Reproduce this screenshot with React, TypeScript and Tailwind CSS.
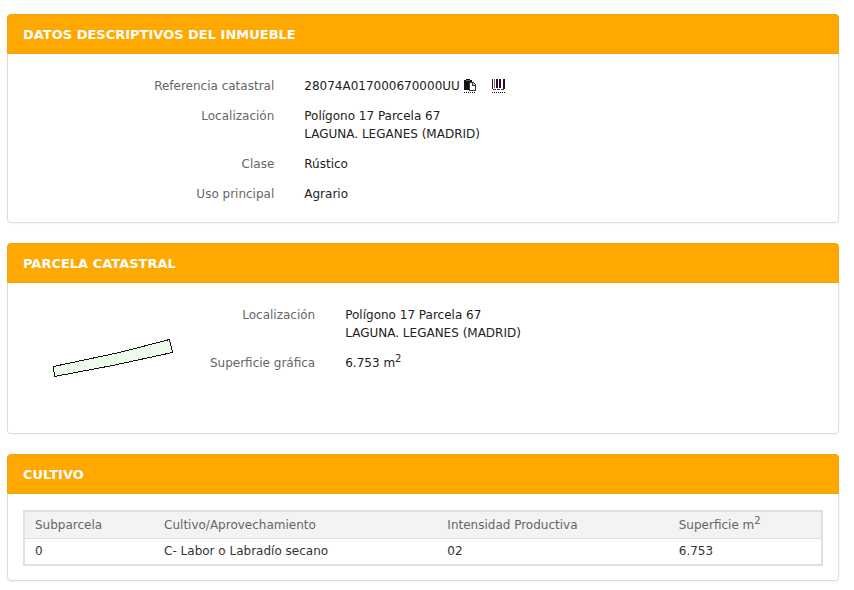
import React from 'react';

type CardProps = {
  title: string;
  children: React.ReactNode;
};

const Card: React.FC<CardProps> = ({ title, children }) => (
  <section className="rounded border border-[#dddddd] bg-white shadow-xs">
    <h2 className="-mx-px -mt-px rounded-t border border-[#f5a30a] bg-[#ffa800] px-[15px] pb-[9px] pt-[11px] text-[13px] font-bold leading-[18px] text-white">
      {title}
    </h2>
    {children}
  </section>
);

const CopyIcon: React.FC = () => (
  <svg width="12" height="14" viewBox="0 0 12 14" shapeRendering="crispEdges">
    <path d="M0 1h2V0h4v1h2v3H5v7H0z" fill="#111" />
    <path d="M2 1h4v1H2z" fill="#666" />
    <path d="M5 3h4l3 3v6H5z" fill="#333" />
    <path d="M6 4h2v3h3v4H6z" fill="#fff" />
    <path d="M9 4l2 2H9z" fill="#ccc" />
    <path d="M0 13.5h12" stroke="#111" strokeDasharray="1 1" />
  </svg>
);

const BarcodeIcon: React.FC = () => (
  <svg width="13" height="14" viewBox="0 0 13 14" shapeRendering="crispEdges">
    <path d="M0 0h1v10H0zM4 0h2v9H4zM7 0h2v9H7zM11 0h2v10h-2z" fill="#2c0f2c" />
    <path d="M2 0h1v9H2z" fill="#8a5c80" />
    <path d="M1 10.5h11" stroke="#5a3352" strokeDasharray="3 1" />
    <path d="M0 13.5h13" stroke="#111" strokeDasharray="1 1" />
  </svg>
);

const App: React.FC = () => {
  return (
    <main className="flex flex-col gap-5 bg-white pb-2 pl-[7px] pr-[15px] pt-[14px] font-['DejaVu_Sans',Verdana,sans-serif] text-[12px] leading-[18px] text-[#222222]">
      {/* Property data */}
      <Card title="DATOS DESCRIPTIVOS DEL INMUEBLE">
        <dl className="grid grid-cols-[32%_1fr] gap-x-[30px] gap-y-3 pb-[19px] pl-px pt-[23px]">
          <dt className="text-right text-[#666666]">Referencia catastral</dt>
          <dd className="flex items-center">
            28074A017000670000UU
            <button type="button" aria-label="Copiar referencia" className="ml-1">
              <CopyIcon />
            </button>
            <button type="button" aria-label="Código de barras" className="ml-4">
              <BarcodeIcon />
            </button>
          </dd>
          <dt className="text-right text-[#666666]">Localización</dt>
          <dd>
            Polígono 17 Parcela 67
            <br />
            LAGUNA. LEGANES (MADRID)
          </dd>
          <dt className="text-right text-[#666666]">Clase</dt>
          <dd>Rústico</dd>
          <dt className="text-right text-[#666666]">Uso principal</dt>
          <dd>Agrario</dd>
        </dl>
      </Card>

      {/* Parcel */}
      <Card title="PARCELA CATASTRAL">
        <div className="grid grid-cols-[22%_1fr] py-[15px]">
          <svg width="122" height="120" viewBox="0 0 122 120" className="ml-11" shapeRendering="crispEdges">
            <path d="M1.5 68.5L67.5 54.5L117.5 41.5L120.5 54.5L60.5 67.5L2.5 78.5Z" fill="#edfbea" stroke="#111" />
          </svg>
          <dl className="grid grid-cols-[19%_1fr] content-start gap-x-[30px] gap-y-3 pl-0.5 pt-2">
            <dt className="whitespace-nowrap text-right text-[#666666]">Localización</dt>
            <dd>
              Polígono 17 Parcela 67
              <br />
              LAGUNA. LEGANES (MADRID)
            </dd>
            <dt className="whitespace-nowrap text-right text-[#666666]">Superficie gráfica</dt>
            <dd>
              6.753 m<sup className="text-[10px]">2</sup>
            </dd>
          </dl>
        </div>
      </Card>

      {/* Crops */}
      <Card title="CULTIVO">
        <div className="px-[15px] pb-[14px] pt-4">
          <table className="w-full table-fixed border-collapse border-2 border-[#e0e0e0] text-left text-[#333333]">
            <thead className="border-b border-[#e0e0e0] bg-[#f3f3f3] text-[#666666]">
              <tr>
                <th className="w-[16.3%] py-1 pl-[10px] font-normal">Subparcela</th>
                <th className="w-[35.5%] py-1 pl-[10px] font-normal">Cultivo/Aprovechamiento</th>
                <th className="w-[29%] py-1 pl-[10px] font-normal">Intensidad Productiva</th>
                <th className="py-1 pl-[10px] font-normal">
                  Superficie m<sup className="text-[10px]">2</sup>
                </th>
              </tr>
            </thead>
            <tbody>
              <tr>
                <td className="pb-1 pl-[10px] pt-[3px]">0</td>
                <td className="pb-1 pl-[10px] pt-[3px]">C- Labor o Labradío secano</td>
                <td className="pb-1 pl-[10px] pt-[3px]">02</td>
                <td className="pb-1 pl-[10px] pt-[3px]">6.753</td>
              </tr>
            </tbody>
          </table>
        </div>
      </Card>
    </main>
  );
};

export default App;
